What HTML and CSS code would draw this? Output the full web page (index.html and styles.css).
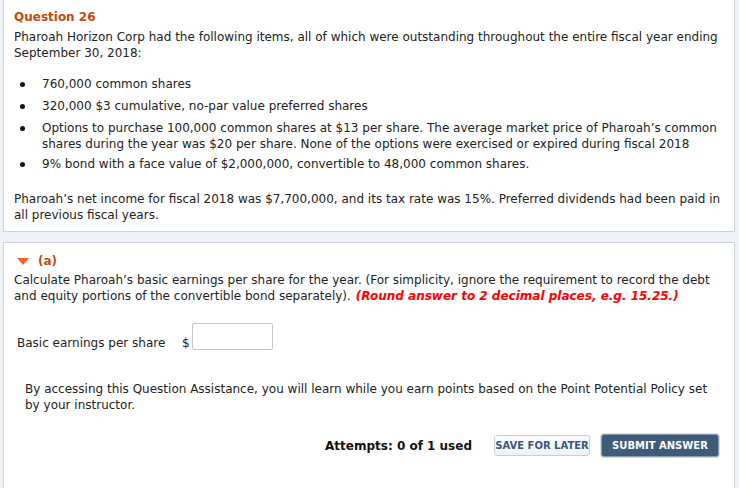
FILE: index.html
```html
<!DOCTYPE html>
<html>
<head>
<meta charset="utf-8">
<link rel="stylesheet" href="styles.css">
</head>
<body>
<div class="page">
  <section class="panel q">
    <h2 class="qtitle">Question 26</h2>
    <p class="intro">Pharoah Horizon Corp had the following items, all of which were outstanding throughout the entire fiscal year ending September 30, 2018:</p>
    <ul class="items">
      <li>760,000 common shares</li>
      <li>320,000 $3 cumulative, no-par value preferred shares</li>
      <li>Options to purchase 100,000 common shares at $13 per share. The average market price of Pharoah’s common shares during the year was $20 per share. None of the options were exercised or expired during fiscal 2018</li>
      <li>9% bond with a face value of $2,000,000, convertible to 48,000 common shares.</li>
    </ul>
    <p class="outro">Pharoah’s net income for fiscal 2018 was $7,700,000, and its tax rate was 15%. Preferred dividends had been paid in all previous fiscal years.</p>
  </section>
  <section class="panel part">
    <div class="parthead"><span class="tri"></span><span class="plabel">(a)</span></div>
    <p class="instr">Calculate Pharoah’s basic earnings per share for the year. (For simplicity, ignore the requirement to record the debt and equity portions of the convertible bond separately).<em class="round">(Round answer to 2 decimal places, e.g. 15.25.)</em></p>
    <div class="answer"><span class="alabel">Basic earnings per share</span><span class="dollar">$</span><span class="input"></span></div>
    <p class="assist">By accessing this Question Assistance, you will learn while you earn points based on the Point Potential Policy set by your instructor.</p>
    <div class="actions">
      <span class="attempts">Attempts: 0 of 1 used</span>
      <span class="btn save">SAVE FOR LATER</span>
      <span class="btn submit">SUBMIT ANSWER</span>
    </div>
  </section>
</div>
</body>
</html>
```
FILE: styles.css
```css
html, body { margin: 0; padding: 0; }
body {
  background: #eef2f7;
  font-family: "DejaVu Sans", Verdana, sans-serif;
  font-size: 12px;
  color: #222;
  width: 739px;
  height: 488px;
  overflow: hidden;
}
.page {
  padding: 0 4px 0 3px;
  display: flex;
  flex-direction: column;
  gap: 10px;
}
.panel {
  background: #fff;
  border: 1px solid #c9d3df;
}
.q {
  border-top: none;
  padding: 8px 10px 12px 10px;
  height: 211px;
}
.qtitle {
  margin: 0;
  font-size: 12px;
  font-weight: bold;
  color: #c9480e;
  line-height: 18px;
}
.intro, .outro, .instr, .assist { margin: 0; line-height: 16px; }
.intro { margin-top: 3px; }
.items {
  list-style: none;
  margin: 15px 0 0 0;
  padding: 0;
}
.items li {
  position: relative;
  padding-left: 28px;
  line-height: 16px;
  margin-bottom: 6px;
}
.items li:nth-child(3) { margin-bottom: 4px; }
.items li::before {
  content: "";
  position: absolute;
  left: 6px;
  top: 6px;
  width: 5px;
  height: 5px;
  border-radius: 50%;
  background: #111;
}
.outro { margin-top: 19px; }
.part {
  padding: 9px 10px 0 10px;
  height: 239px;
}
.parthead { display: flex; align-items: center; gap: 9px; height: 18px; }
.tri {
  width: 0; height: 0;
  margin-left: 3px;
  border-left: 6px solid transparent;
  border-right: 6px solid transparent;
  border-top: 7px solid #f26522;
}
.plabel { font-weight: bold; color: #c9480e; font-size: 12px; }
.instr { margin-top: 2px; }
.round { color: #f00; font-weight: bold; margin-left: 5px; }
.answer {
  display: flex;
  align-items: center;
  margin-top: 19px;
  padding-left: 3px;
  height: 27px;
}
.alabel { width: 165px; padding-top: 12px; }
.dollar { padding-top: 12px; width: 10px; }
.input {
  width: 79px;
  height: 25px;
  border: 1px solid #c8c8c8;
  border-radius: 2px;
  background: #fff;
}
.assist { margin-top: 31px; padding-left: 11px; padding-right: 12px; }
.actions {
  display: flex;
  align-items: center;
  justify-content: flex-end;
  margin-top: 21px;
  padding-right: 5px;
}
.attempts { font-weight: bold; font-size: 12px; color: #111; margin-right: 22px; }
.btn {
  font-family: "DejaVu Sans", Verdana, sans-serif;
  font-weight: bold;
  font-size: 10px;
  border-radius: 3px;
  display: inline-flex;
  align-items: center;
  justify-content: center;
}
.save {
  width: 94px;
  height: 19px;
  border: 1px solid #c5d0dd;
  background: linear-gradient(#fbfcfe, #eef2f7);
  color: #3a5878;
}
.submit {
  margin-left: 11px;
  width: 116px;
  height: 21px;
  border: 1px solid #8a9cb0;
  background: #3e5b79;
  color: #fff;
  box-shadow: 0 0 0 1px #d5dde6;
}
```
